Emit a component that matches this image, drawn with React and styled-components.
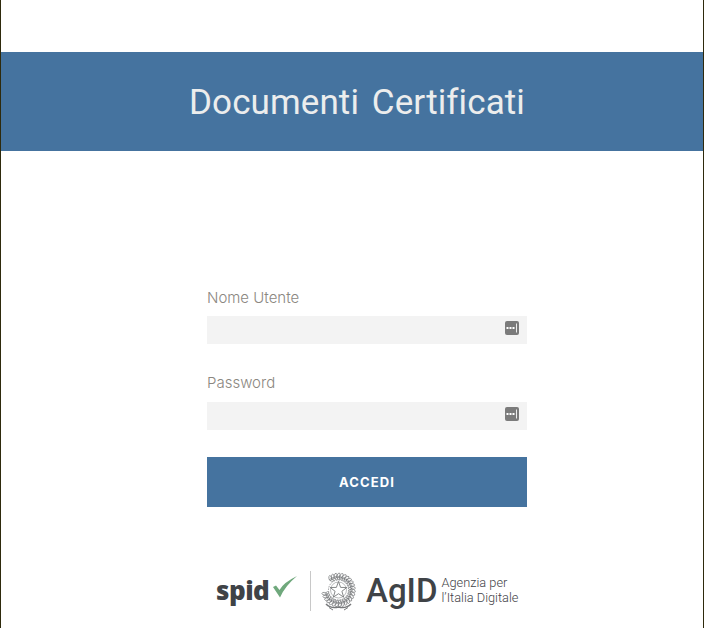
import React from "react";
import styled, { createGlobalStyle } from "styled-components";

const Global = createGlobalStyle`
  html, body { margin: 0; padding: 0; background: #fff; overflow: hidden; }
`;
const Page = styled.div`
  box-sizing: border-box;
  width: 704px;
  height: 628px;
  border-left: 1px solid #2e2a0c;
  border-right: 1px solid #2e2a0c;
  padding-top: 52px;
  display: flex;
  flex-direction: column;
  background: #fff;
  overflow: hidden;
`;
const Banner = styled.header`
  height: 99px;
  box-sizing: border-box;
  background: #45739f;
  display: flex;
  align-items: center;
  justify-content: center;
  padding: 2px 0 0 10px;
`;
const Title = styled.h1`
  margin: 0;
  font-family: "Roboto", sans-serif;
  font-weight: 400;
  font-size: 35px;
  letter-spacing: 0.1px;
  word-spacing: 4px;
  color: #eceded;
`;
const Main = styled.main`
  width: 320px;
  margin: 137px 0 0 206px;
  display: flex;
  flex-direction: column;
`;
const Field = styled.div`
  display: flex;
  flex-direction: column;
  height: 86px;
`;
const Label = styled.label`
  font-family: "Inter", sans-serif;
  font-weight: 300;
  font-size: 15px;
  line-height: 20px;
  color: #8b8781;
  margin-top: ${(p) => (p.$raised ? "-1px" : "0")};
  margin-bottom: ${(p) => (p.$raised ? "9px" : "8px")};
`;
const InputBox = styled.div`
  height: 28px;
  box-sizing: border-box;
  background: #f3f3f3;
  display: flex;
  align-items: center;
  justify-content: flex-end;
  padding: 0 8px 4px 0;
`;
const Button = styled.button`
  height: 50px;
  margin-top: -3px;
  padding: 0;
  border: 0;
  background: #45739f;
  color: #fff;
  font-family: "Inter", sans-serif;
  font-weight: 700;
  font-size: 13px;
  letter-spacing: 1.1px;
`;
const Logos = styled.div`
  display: flex;
  align-items: center;
  margin: 64px 0 0 9px;
  color: #3f4347;
  height: 40px;
`;
const Spid = styled.div`
  display: flex;
  align-items: center;
  width: 80px;
  font-family: "Open Sans", sans-serif;
  font-weight: 800;
  font-size: 26px;
  letter-spacing: -0.5px;
  line-height: 1;
  padding-bottom: 3px;
`;
const CheckMark = styled.svg`
  flex: none;
  margin-left: 4px;
  margin-top: -6px;
  margin-right: -10px;
`;
const Divider = styled.div`
  width: 1px;
  height: 40px;
  background: #c8c8c8;
  margin: 0 10px 0 14px;
`;
const AgidName = styled.div`
  font-family: "Roboto", sans-serif;
  font-weight: 500;
  font-size: 33px;
  line-height: 1;
  margin-left: 10px;
  padding-bottom: 2px;
`;
const AgidText = styled.div`
  font-family: "Roboto", sans-serif;
  font-weight: 300;
  font-size: 12.8px;
  line-height: 15px;
  margin-left: 4px;
  white-space: nowrap;
  padding-bottom: 3px;
`;

const KeyIcon = () => (
  <svg width="14" height="14" viewBox="0 0 14 14">
    <rect width="14" height="14" rx="2" fill="#7b7b7b" />
    <rect x="1.5" y="6" width="2" height="2" fill="#fff" />
    <rect x="4.5" y="6" width="2" height="2" fill="#fff" />
    <rect x="7.5" y="6" width="2" height="2" fill="#fff" />
    <rect x="11" y="2.5" width="1" height="9" fill="#eee" />
  </svg>
);

const Check = () => (
  <CheckMark width="24" height="22" viewBox="0 0 24 22">
    <path d="M0 11 L7 21.5 Q12 10 24 0 Q10.5 6.5 6.5 14 L3 9.5 Z" fill="#6fa87c" />
  </CheckMark>
);

const leaves = Array.from({ length: 26 }, (_, i) => -75 + i * 11.6);

const Emblem = () => (
  <svg width="35" height="39" viewBox="0 0 35 39" fill="none" stroke="#77797b">
    {leaves.map((a) => (
      <ellipse
        key={a}
        cx="17.5"
        cy="3.5"
        rx="1.3"
        ry="2.6"
        strokeWidth="0.7"
        transform={`rotate(${a + 40} 17.5 18) rotate(25 17.5 3.5)`}
      />
    ))}
    {leaves.map((a) => (
      <ellipse
        key={`b${a}`}
        cx="17.5"
        cy="6"
        rx="1"
        ry="2"
        strokeWidth="0.6"
        transform={`rotate(${a + 40} 17.5 18) rotate(-25 17.5 6)`}
      />
    ))}
    <circle cx="17.5" cy="18" r="10" strokeWidth="0.7" strokeDasharray="1.6 1" fill="#fff" />
    <circle cx="17.5" cy="18" r="8" strokeWidth="0.5" />
    <path d="M17.5 9.5 L19.6 15.4 L25.8 15.5 L20.9 19.3 L22.7 25.2 L17.5 21.7 L12.3 25.2 L14.1 19.3 L9.2 15.5 L15.4 15.4 Z" strokeWidth="0.9" fill="#fff" />
    <path d="M5 32 Q10 37 17.5 35 Q25 37 30 32" strokeWidth="1.5" />
    <path d="M8 35.5 L12 38 M27 35.5 L23 38" strokeWidth="1" />
  </svg>
);

export default function App() {
  return (
    <Page>
      <Global />
      <Banner>
        <Title>Documenti Certificati</Title>
      </Banner>
      <Main>
        <Field>
          <Label>Nome Utente</Label>
          <InputBox><KeyIcon /></InputBox>
        </Field>
        <Field>
          <Label $raised>Password</Label>
          <InputBox><KeyIcon /></InputBox>
        </Field>
        <Button>ACCEDI</Button>
        <Logos>
          <Spid>spid<Check /></Spid>
          <Divider />
          <Emblem />
          <AgidName>AgID</AgidName>
          <AgidText>Agenzia per<br />l’Italia Digitale</AgidText>
        </Logos>
      </Main>
    </Page>
  );
}
